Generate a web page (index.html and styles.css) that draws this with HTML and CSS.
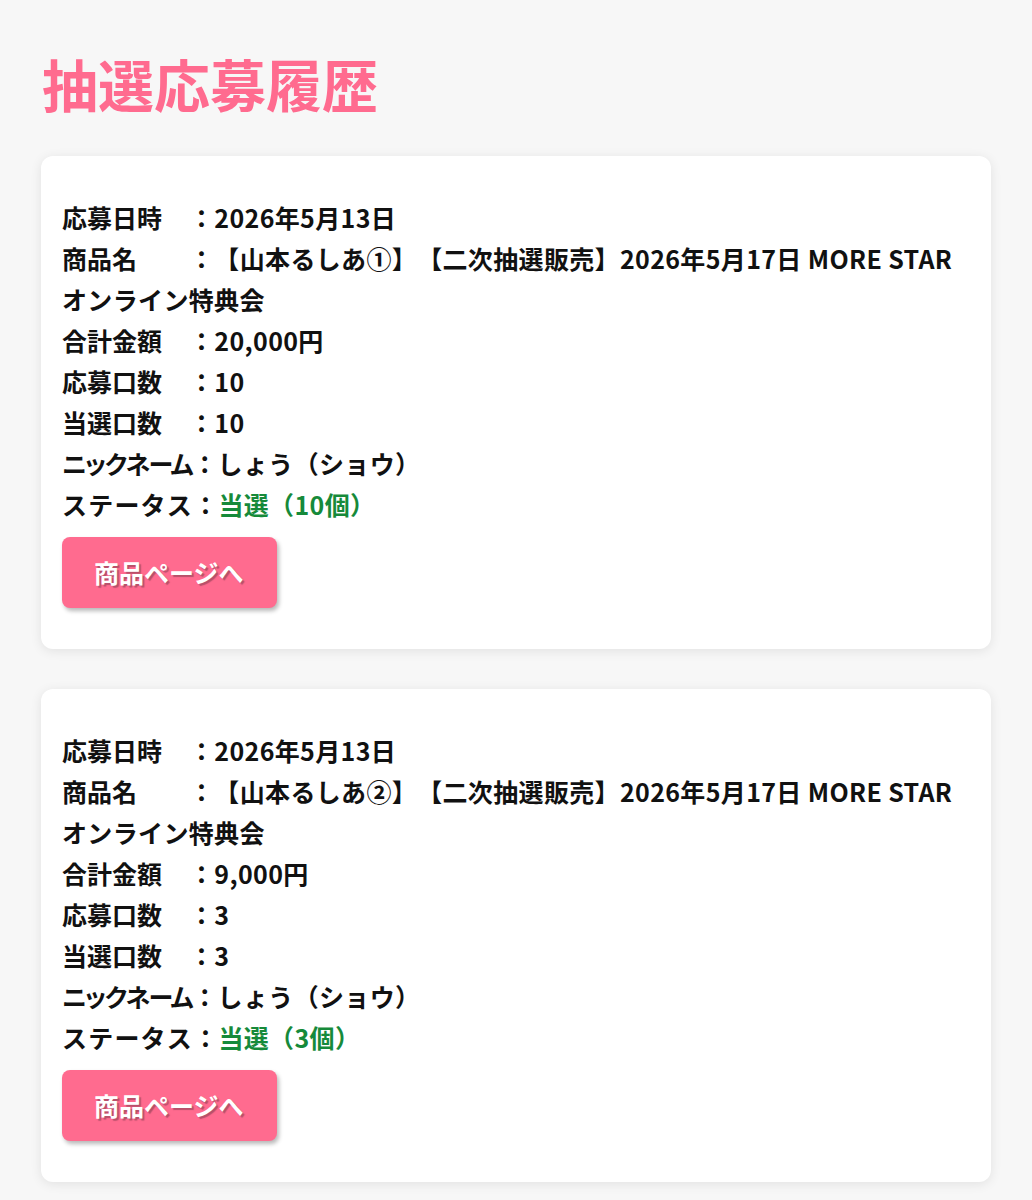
FILE: index.html
```html
<!DOCTYPE html>
<html lang="ja">
<head>
<meta charset="utf-8">
<title>抽選応募履歴</title>
<link rel="stylesheet" href="styles.css">
</head>
<body>
<main class="page">
  <h1 class="title">抽選応募履歴</h1>

  <section class="card">
    <p class="info">
      <span class="label">応募日時</span>：2026年5月13日<br>
      <span class="label">商品名</span>：【山本るしあ①】【二次抽選販売】2026年5月17日 MORE STAR オンライン特典会<br>
      <span class="label">合計金額</span>：20,000円<br>
      <span class="label">応募口数</span>：10<br>
      <span class="label">当選口数</span>：10<br>
      <span class="label label-nick">ニックネーム</span>：しょう（ショウ）<br>
      <span class="label label-status">ステータス</span>：<span class="win">当選（10個）</span>
    </p>
    <a class="btn" href="#">商品ページへ</a>
  </section>

  <section class="card">
    <p class="info">
      <span class="label">応募日時</span>：2026年5月13日<br>
      <span class="label">商品名</span>：【山本るしあ②】【二次抽選販売】2026年5月17日 MORE STAR オンライン特典会<br>
      <span class="label">合計金額</span>：9,000円<br>
      <span class="label">応募口数</span>：3<br>
      <span class="label">当選口数</span>：3<br>
      <span class="label label-nick">ニックネーム</span>：しょう（ショウ）<br>
      <span class="label label-status">ステータス</span>：<span class="win">当選（3個）</span>
    </p>
    <a class="btn" href="#">商品ページへ</a>
  </section>
</main>
</body>
</html>
```

FILE: styles.css
```css
html, body {
  margin: 0;
  padding: 0;
  background: #f7f7f7;
}
body {
  font-family: "Noto Sans CJK JP", "Noto Sans", sans-serif;
  color: #111;
  text-spacing-trim: space-all;
}
.page {
  padding: 0 41px 20px;
}
.title {
  margin: 44px 0 34px 1px;
  font-size: 56px;
  line-height: 78px;
  font-weight: 700;
  color: #ff6b8f;
}
.card {
  background: #fff;
  border-radius: 12px;
  box-shadow: 0 2px 12px rgba(0, 0, 0, 0.09);
  padding: 41px 21px 41px;
  margin-bottom: 40px;
}
.info {
  margin: 0;
  font-size: 25px;
  line-height: 41px;
  font-weight: 700;
  letter-spacing: 0.35px;
}
.label {
  display: inline-block;
  min-width: 127px;
  letter-spacing: 0;
}
.label-nick {
  min-width: 0;
  font-feature-settings: "palt";
  letter-spacing: -1.5px;
}
.label-status {
  min-width: 0;
  letter-spacing: 1.2px;
}
.win {
  color: #168a3a;
}
.btn {
  display: inline-block;
  margin-top: 12px;
  background: #ff6b8f;
  color: #fff;
  text-decoration: none;
  font-size: 25px;
  line-height: 41px;
  font-weight: 700;
  padding: 15px 33px 15px 32px;
  border-radius: 8px;
  box-shadow: 2px 3px 4px rgba(0, 0, 0, 0.28);
  text-shadow: 2px 2px 1px #b8506a;
}
```
